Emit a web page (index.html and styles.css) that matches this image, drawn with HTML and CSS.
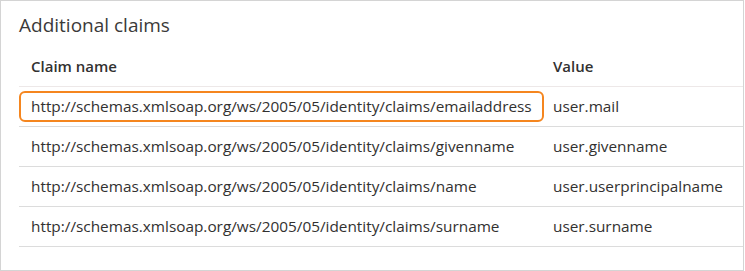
FILE: index.html
```html
<!DOCTYPE html>
<html lang="en">
<head>
<meta charset="utf-8">
<title>Additional claims</title>
<link rel="stylesheet" href="styles.css">
</head>
<body>
  <section class="panel">
    <h2 class="panel-title">Additional claims</h2>
    <div class="claims">
      <div class="row head">
        <div class="cell">Claim name</div>
        <div class="cell">Value</div>
      </div>
      <div class="row">
        <div class="cell"><span class="highlight">http://schemas.xmlsoap.org/ws/2005/05/identity/claims/emailaddress</span></div>
        <div class="cell">user.mail</div>
      </div>
      <div class="row">
        <div class="cell">http://schemas.xmlsoap.org/ws/2005/05/identity/claims/givenname</div>
        <div class="cell">user.givenname</div>
      </div>
      <div class="row">
        <div class="cell">http://schemas.xmlsoap.org/ws/2005/05/identity/claims/name</div>
        <div class="cell">user.userprincipalname</div>
      </div>
      <div class="row">
        <div class="cell">http://schemas.xmlsoap.org/ws/2005/05/identity/claims/surname</div>
        <div class="cell">user.surname</div>
      </div>
    </div>
  </section>
</body>
</html>
```

FILE: styles.css
```css
html, body {
  margin: 0;
  background: #ffffff;
}

body {
  font-family: "Open Sans", "Noto Sans", "Liberation Sans", sans-serif;
  color: #323130;
}

.panel {
  box-sizing: border-box;
  width: 744px;
  height: 271px;
  border: 1px solid #d4d4d4;
  padding: 0 0 0 18px;
}

.panel-title {
  margin: 0;
  padding-top: 12px;
  font-size: 19px;
  line-height: 24px;
  font-weight: 400;
  color: #3b3a39;
}

.claims {
  margin-top: 13px;
}

.row {
  box-sizing: border-box;
  display: grid;
  grid-template-columns: 522px 1fr;
  height: 40px;
  align-items: center;
  border-bottom: 1px solid #dcdcdc;
  font-size: 15.35px;
  line-height: 21px;
  white-space: nowrap;
}

.row.head {
  height: 37px;
  align-items: start;
  padding-top: 6px;
  font-size: 15px;
  line-height: 20px;
  font-weight: 600;
  border-bottom-color: #ede8e8;
}

.cell {
  padding-left: 12px;
}

.highlight {
  display: inline-block;
  margin-left: -12px;
  padding: 3px 10px 3px 10px;
  border: 2px solid #f5861f;
  border-radius: 6px;
}
```
